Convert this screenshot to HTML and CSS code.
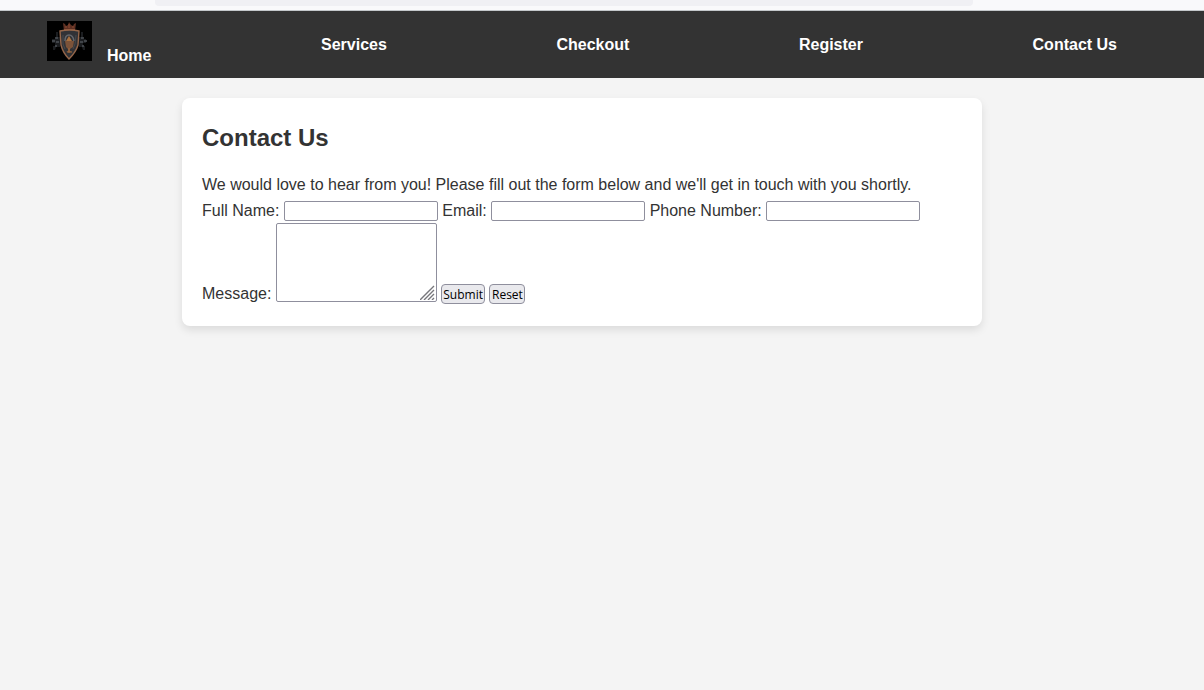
FILE: index.html
```html
<!DOCTYPE html>
<html lang="en">
<head>
<meta charset="utf-8">
<title>Contact Us</title>
<link rel="stylesheet" href="styles.css">
</head>
<body>
<div class="browser-strip"><div class="address-bar"></div></div>
<header class="site-header">
  <nav>
    <ul class="nav-list">
      <li>
        <a class="nav-link home-link" href="#">
          <svg class="logo" viewBox="0 0 45 40" aria-hidden="true">
            <rect width="45" height="40" fill="#000"/>
            <path d="M9 11h2v5h2v10h-4l-1 3H6v-4h2v-3H5v-4h4zM36 11h-2v5h-2v10h3l1 3h2v-4h-2v-3h3v-4h-3z" fill="#1b1d20"/>
            <path d="M5 20h3M8 17h3M9 21h3M8 25h2M37 20h3M34 17h3M33 21h3M35 25h2" stroke="#4e5257" stroke-width="1.4"/>
            <path d="M16 2l2 1 1 2 2-1 1-3 2 3 2 1 1-2 2-1-1 8H17z" fill="#5e3023"/>
            <path d="M17 8.500h11M19 5v2M22 3v4M26 5v2" stroke="#8a4a32" fill="none"/>
            <path d="M13 10q10-2 19 0l-1 14q-2 7-9 14q-6-6-8-14z" fill="#313236" stroke="#94664a" stroke-width="1.4"/>
            <path d="M18 20q0-6 4-6t5 6" fill="none" stroke="#65686d" stroke-width="1.5"/>
            <path d="M22 15l3 5h-6z" fill="#a9713f"/>
            <path d="M18 20h9l-1 6-3 2v2l2 1h-6l2-1v-2l-2-2z" fill="#7c5339"/>
            <path d="M16 14v9l2 5M29 14l-1 9-2 5" fill="none" stroke="#48494c"/>
            <path d="M20 31h5M22 27v5" stroke="#a0683d"/>
          </svg>Home</a>
      </li>
      <li><a class="nav-link" href="#">Services</a></li>
      <li><a class="nav-link" href="#">Checkout</a></li>
      <li><a class="nav-link" href="#">Register</a></li>
      <li><a class="nav-link" href="#">Contact Us</a></li>
    </ul>
  </nav>
</header>
<main class="page">
  <section class="card">
    <h2 class="card-title">Contact Us</h2>
    <p class="intro">We would love to hear from you! Please fill out the form below and we'll get in touch with you shortly.</p>
    <form class="contact-form">
      <label for="name">Full Name:</label>
      <input class="field" type="text" id="name">
      <label for="email">Email:</label>
      <input class="field" type="email" id="email">
      <label for="phone">Phone Number:</label>
      <input class="field" type="tel" id="phone">
      <br>
      <label for="message">Message:</label>
      <span class="message-box"><textarea class="message" id="message"></textarea><svg class="grip" viewBox="0 0 15 15" aria-hidden="true"><path d="M0 15L14 1M4 15L14 5M8 15l6-6M12 15l2-2" stroke="#77777c" stroke-width="1.4" fill="none"/></svg></span>
      <button class="button" type="submit">Submit</button>
      <button class="button" type="reset">Reset</button>
    </form>
  </section>
</main>
</body>
</html>
```
FILE: styles.css
```css
* {
  box-sizing: border-box;
}

body {
  margin: 0;
  background: #f4f4f4;
  color: #333;
  font-family: "Liberation Sans", Arial, sans-serif;
  font-size: 16px;
  line-height: 26px;
}

.browser-strip {
  height: 11px;
  padding: 0 231px 0 155px;
  background: #f9f9fb;
  border-bottom: 1px solid #c4c8cb;
}

.address-bar {
  height: 6px;
  background: #f0f0f4;
  border-radius: 0 0 4px 4px;
}

.site-header {
  padding: 10px 87px 10px 47px;
  background: #333;
  line-height: 24px;
}

.nav-list {
  display: flex;
  justify-content: space-between;
  align-items: center;
  margin: 0;
  padding: 0;
  list-style: none;
}

.nav-link {
  color: #fff;
  font-weight: bold;
  text-decoration: none;
}

.home-link {
  display: block;
}

.logo {
  width: 45px;
  height: 40px;
  margin-right: 15px;
  vertical-align: baseline;
}

.page {
  padding: 20px 40px 20px 0;
}

.card {
  max-width: 800px;
  margin: 0 auto;
  padding: 20px;
  background: #fff;
  border-radius: 8px;
  box-shadow: 0 4px 8px rgba(0, 0, 0, 0.1);
}

.card-title {
  margin: 0 0 14px;
  font-size: 24px;
  line-height: 40px;
}

.intro {
  margin: 0;
}

.contact-form {
  line-height: 25px;
}

.field,
.message {
  padding: 1px;
  border: 1px solid #8f8f9d;
  border-radius: 2px;
  background: #fff;
  font-family: "Liberation Sans", Arial, sans-serif;
  font-size: 14px;
}

.field {
  width: 154px;
  height: 20px;
}

.message-box {
  display: inline-block;
  position: relative;
  vertical-align: text-bottom;
  line-height: 0;
}

.message {
  width: 161px;
  height: 79px;
  resize: none;
}

.grip {
  position: absolute;
  right: 2px;
  bottom: 2px;
  width: 15px;
  height: 15px;
  pointer-events: none;
}

.button {
  min-width: 36px;
  height: 20px;
  padding: 1px 1px 0;
  border: 1px solid #8f8f9d;
  border-radius: 4px;
  background: #e9e9ed;
  color: #000;
  font-family: "Open Sans", sans-serif;
  font-size: 12px;
  line-height: 18px;
}
```
